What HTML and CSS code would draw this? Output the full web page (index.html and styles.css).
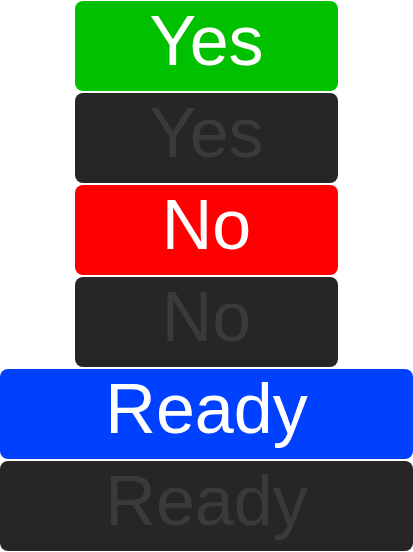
FILE: index.html
```html
<!DOCTYPE html>
<html>
<head>
<meta charset="utf-8">
<link rel="stylesheet" href="styles.css">
</head>
<body>
<div class="stack">
  <div class="btn narrow green">Yes</div>
  <div class="btn narrow dark">Yes</div>
  <div class="btn narrow red">No</div>
  <div class="btn narrow dark">No</div>
  <div class="btn wide blue">Ready</div>
  <div class="btn wide dark">Ready</div>
</div>
</body>
</html>
```
FILE: styles.css
```css
html, body {
  margin: 0;
  padding: 0;
  background: #ffffff;
}
.stack {
  display: flex;
  flex-direction: column;
  align-items: center;
  width: 413px;
}
.btn {
  box-sizing: border-box;
  height: 90px;
  margin: 1px 0;
  border-radius: 8px;
  font-family: "Liberation Sans", Arial, sans-serif;
  font-size: 70px;
  line-height: 80px;
  padding-bottom: 10px;
  text-align: center;
  color: #ffffff;
}
.narrow { width: 263px; }
.wide { width: 413px; }
.green { background: #00c000; }
.red { background: #ff0000; }
.blue { background: #0040ff; }
.dark { background: #262626; color: #3a3a3a; }
```
